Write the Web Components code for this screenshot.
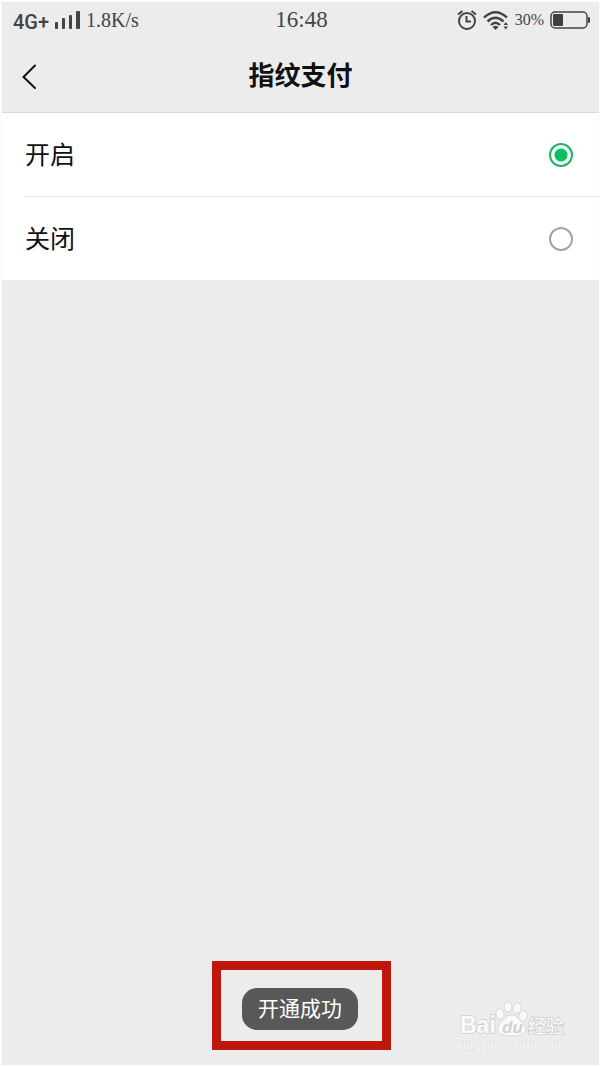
<!DOCTYPE html>
<html lang="zh-CN">
<head>
<meta charset="utf-8">
<meta name="viewport" content="width=device-width, initial-scale=1">
<title>指纹支付</title>
<style>
  body {
    margin: 0;
    background: #fcfcfc;
    color: #111;
    font-family: "Liberation Sans", "Noto Sans CJK SC", sans-serif;
  }
</style>
</head>
<body>
<pay-screen>
  <status-bar slot="top"></status-bar>
  <nav-header slot="top">指纹支付</nav-header>
  <choice-list>
    <span slot="on">开启</span>
    <span slot="off">关闭</span>
  </choice-list>
  <toast-message slot="toast">开通成功</toast-message>
  <site-mark slot="mark"></site-mark>
</pay-screen>

<script>
// Attach an open shadow root filled with the given markup
const define = (name, html) => {
  const template = document.createElement('template');
  template.innerHTML = html;
  customElements.define(name, class extends HTMLElement {
    constructor() {
      super();
      this.attachShadow({ mode: 'open' }).append(template.content.cloneNode(true));
    }
  });
};

define('pay-screen', `
  <style>
    :host {
      display: flex;
      flex-direction: column;
      box-sizing: border-box;
      min-height: 100vh;
      padding: 2px 1px 1px 2px;
      position: relative;
    }
    header, main { background: #ececec; }
    header { border-bottom: 1px solid #dadada; }
    main {
      flex: 1;
      display: flex;
      flex-direction: column;
      justify-content: space-between;
      padding-bottom: 15px;
    }
    .toast { display: flex; justify-content: center; padding-left: 2px; }
    .mark { position: absolute; right: 33px; bottom: 12px; }
  </style>
  <header><slot name="top"></slot></header>
  <main>
    <slot></slot>
    <div class="toast"><slot name="toast"></slot></div>
  </main>
  <div class="mark"><slot name="mark"></slot></div>
`);

define('status-bar', `
  <style>
    :host {
      display: grid;
      grid-template-columns: 1fr auto 1fr;
      align-items: center;
      height: 36px;
      padding: 0 9px 0 11px;
      color: #444;
      font-family: "Liberation Serif", serif;
      font-size: 20px;
    }
    .side { display: flex; align-items: center; gap: 6px; }
    .end { justify-content: flex-end; }
    .net { font: 500 20px Roboto, sans-serif; padding-top: 4px; }
    .time { font-size: 23px; }
    .level { font-size: 16px; }
    svg { display: block; }
  </style>
  <div class="side">
    <span class="net">4G+</span>
    <svg width="25" height="18" fill="#444" aria-label="信号">
      <rect x="0" y="11" width="3" height="7" rx="1"/>
      <rect x="7" y="7" width="3" height="11" rx="1"/>
      <rect x="14" y="4" width="3" height="14" rx="1"/>
      <rect x="21" y="0" width="4" height="18" rx="1"/>
    </svg>
    <span>1.8K/s</span>
  </div>
  <span class="time">16:48</span>
  <div class="side end">
    <svg width="20" height="20" fill="none" stroke="#444" stroke-width="2" aria-label="闹钟">
      <circle cx="10" cy="11" r="8"/>
      <path d="M9.5 6v5.5H14M1 4.5 5.5 1M19 4.5 14.5 1"/>
    </svg>
    <svg width="26" height="20" fill="none" stroke="#444" stroke-width="2.4" aria-label="无线网络">
      <path d="M1 7.5Q12.5-3 24 7.5M4.5 11.5Q12.5 4 20.5 11.5M8 15Q12.5 10.5 17 15"/>
      <path d="M9.5 17Q12.5 14.5 15.5 17L12.5 20ZM20.5 15 22.8 12 25 15ZM20.5 16.5 22.8 19.5 25 16.5Z" fill="#444" stroke="none"/>
    </svg>
    <span class="level">30%</span>
    <svg width="40" height="18" aria-label="电池">
      <rect x="1" y="1" width="36" height="16" rx="4" fill="none" stroke="#444" stroke-width="1.5"/>
      <rect x="3" y="3" width="10" height="12" rx="1" fill="#403f38"/>
      <rect x="38" y="6" width="2" height="6" rx="1" fill="#444"/>
    </svg>
  </div>
`);

define('nav-header', `
  <style>
    :host {
      display: grid;
      grid-template-columns: 56px 1fr 56px;
      align-items: center;
      height: 72px;
      padding-top: 2px;
    }
    button {
      width: 56px;
      height: 48px;
      padding: 0 0 0 20px;
      border: 0;
      background: none;
    }
    svg { display: block; }
    h1 {
      margin: 0;
      color: #111;
      font-size: 26px;
      line-height: 36px;
      text-align: center;
    }
  </style>
  <button type="button" aria-label="返回">
    <svg width="16" height="26" fill="none" stroke="#111" stroke-width="2" stroke-linecap="round">
      <path d="M13 2.5 1.5 14 13 25"/>
    </svg>
  </button>
  <h1><slot></slot></h1>
`);

define('choice-list', `
  <style>
    :host { display: block; background: #fff; }
    fieldset { margin: 0; padding: 0 0 0 23px; border: 0; }
    label {
      display: flex;
      align-items: center;
      justify-content: space-between;
      box-sizing: border-box;
      height: 83px;
      padding: 0 26px 0 0;
      font-size: 25px;
      cursor: pointer;
    }
    label + label { height: 84px; border-top: 1px solid #e6e6e6; }
    ::slotted(span) { padding-bottom: 4px; }
    input {
      appearance: none;
      box-sizing: border-box;
      width: 24px;
      height: 24px;
      margin: 0;
      border: 2px solid #a4a4a4;
      border-radius: 50%;
    }
    input:checked {
      border-color: #18b566;
      background: radial-gradient(circle, #07c160 6px, #fff 7px);
    }
  </style>
  <fieldset aria-label="指纹支付">
    <label><slot name="on"></slot><input type="radio" name="fingerprint" value="on" checked></label>
    <label><slot name="off"></slot><input type="radio" name="fingerprint" value="off"></label>
  </fieldset>
`);

define('toast-message', `
  <style>
    :host {
      display: block;
      padding: 18px 24px 11px 21px;
      border: 9px solid #be170b;
    }
    div {
      padding: 6px 16px;
      border-radius: 15px;
      background: #585858;
      color: #fff;
      font-size: 21px;
      line-height: 30px;
    }
  </style>
  <div role="status"><slot></slot></div>
`);

define('site-mark', `
  <style>
    :host { display: block; }
    svg { display: block; overflow: visible; }
    text {
      font-family: "Liberation Sans", "Noto Sans CJK SC", sans-serif;
      fill: #fafafa;
      stroke: #d4d4d4;
      stroke-width: 2;
      paint-order: stroke;
    }
    .paw { fill: #fafafa; stroke: #d8d8d8; }
    .du { fill: #d2d2d2; stroke: none; }
    .url { stroke: #dedede; stroke-width: 1; }
  </style>
  <svg width="107" height="52">
    <text x="0" y="31" font-size="23" font-weight="bold">Bai</text>
    <g class="paw">
      <ellipse cx="40" cy="12" rx="4" ry="5" transform="rotate(-15 40 12)"/>
      <ellipse cx="48" cy="5" rx="4" ry="5"/>
      <ellipse cx="57" cy="6" rx="4" ry="5" transform="rotate(12 57 6)"/>
      <ellipse cx="63" cy="14" rx="4" ry="5" transform="rotate(20 63 14)"/>
      <path d="M52 13C46 13 45 17 41 20C37 23 36 33 43 33C48 34 56 34 60 33C67 33 67 25 63 21C59 18 58 13 52 13Z"/>
    </g>
    <text class="du" x="42" y="31" font-size="17" font-weight="bold" font-style="italic">du</text>
    <text x="68" y="31" font-size="18">经验</text>
    <text class="url" x="0" y="48" font-size="13">jingyan.baidu.com</text>
  </svg>
`);
</script>
</body>
</html>
